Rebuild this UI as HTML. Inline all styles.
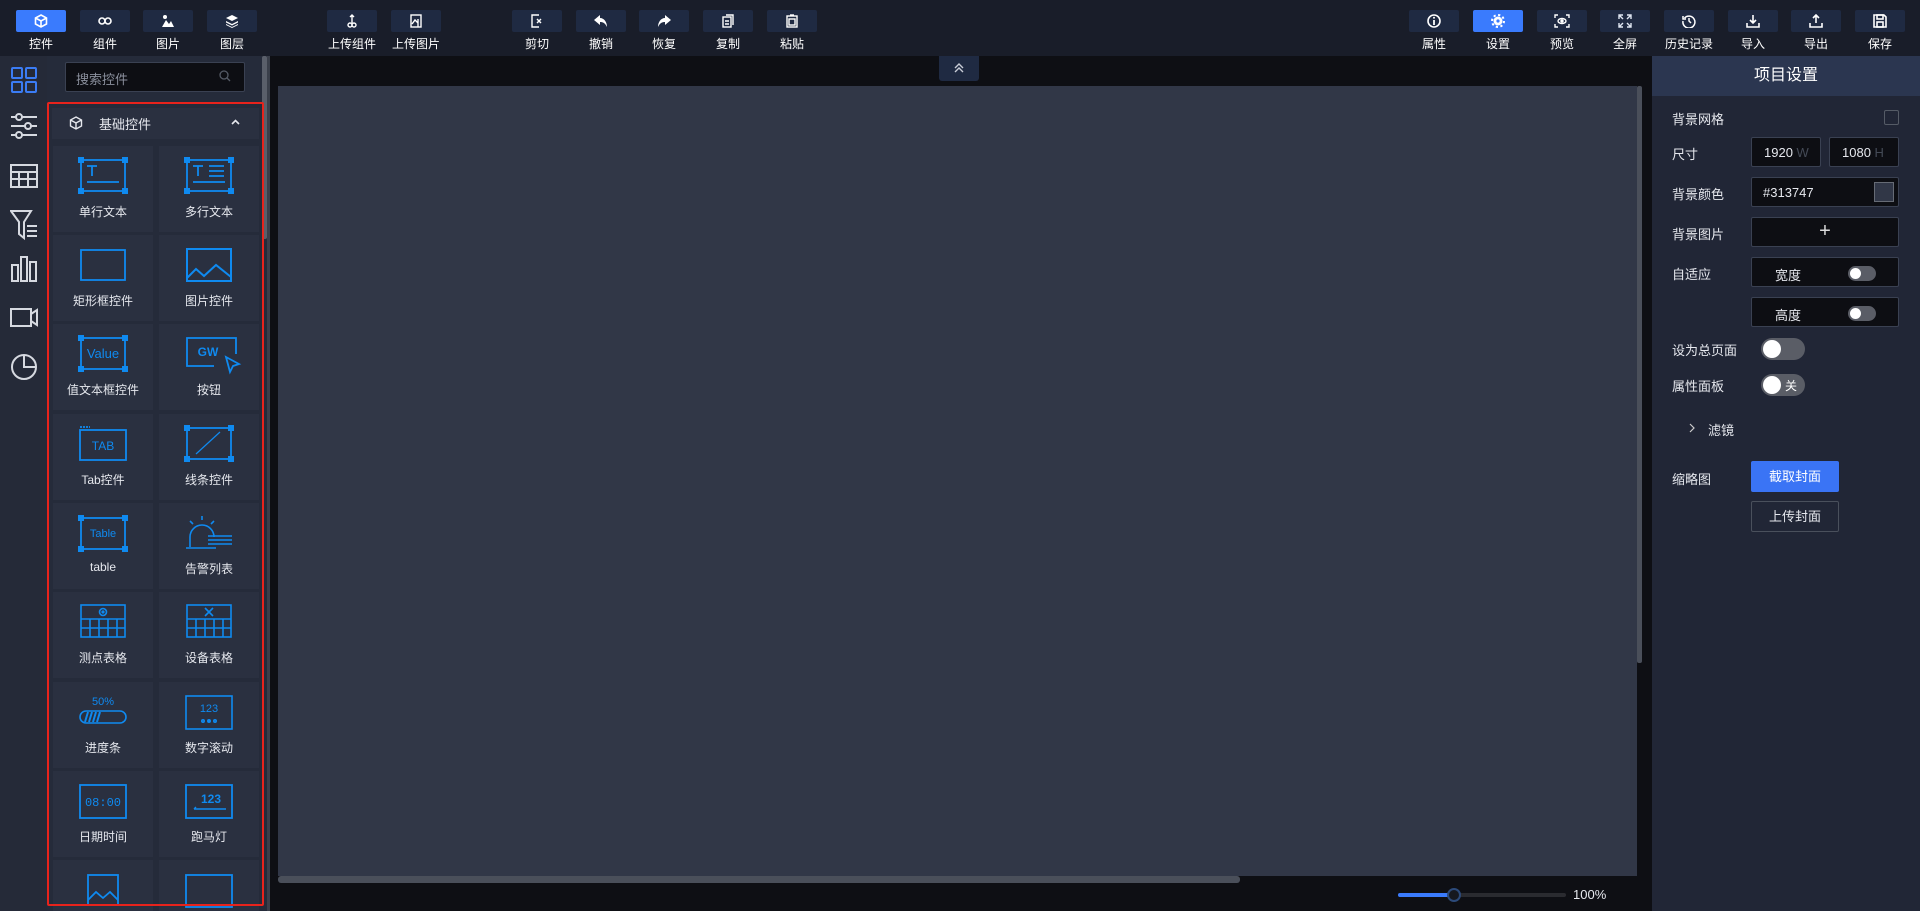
<!DOCTYPE html>
<html><head><meta charset="utf-8"><style>
*{margin:0;padding:0;box-sizing:border-box}
body{width:1920px;height:911px;overflow:hidden;background:#0e0f14;font-family:"Liberation Sans","Noto Sans CJK SC",sans-serif;color:#e6e8ee;position:relative}
.a{position:absolute}
.top{left:0;top:0;width:1920px;height:56px;background:#191d29}
.tb{position:absolute;top:10px;width:50px;height:22px;background:#1f2a42;border-radius:2px;display:flex;align-items:center;justify-content:center}
.tb.on{background:#3a7bfd}
.tl{position:absolute;top:35px;width:70px;text-align:center;font-size:12px;color:#fff}
.rail{left:0;top:56px;width:47px;height:855px;background:#252a38}
.panel{left:47px;top:56px;width:220px;height:855px;background:#252b3a}
.card{position:absolute;width:100px;height:86px;background:#2a3040}
.card svg{position:absolute;left:25px;top:10px;overflow:visible}
.card span{position:absolute;left:0;right:0;top:57px;text-align:center;font-size:12px;color:#e6e8ee}
.rp{left:1652px;top:56px;width:268px;height:855px;background:#212636}
.lab{position:absolute;left:20px;font-size:13px;color:#e6e8ee;white-space:nowrap}
.box{position:absolute;background:#0d0e13;border:1px solid #3a4152;border-radius:2px;font-size:13px;white-space:nowrap}
.tg{position:absolute;background:#5a5d66;border-radius:11px}
.tg i{position:absolute;background:#fff;border-radius:50%}
</style></head><body>
<div class="a top"></div>
<div class="tb on" style="left:16px"><svg width="14" height="14" viewBox="0 0 14 14" fill="none" stroke="#fff" stroke-width="1.6"><path d="M7 1L12.5 4V10L7 13L1.5 10V4Z M1.5 4L7 7L12.5 4 M7 7V13"/></svg></div><div class="tl" style="left:6px">控件</div>
<div class="tb" style="left:80px"><svg width="14" height="10" viewBox="0 0 14 10" fill="none" stroke="#fff" stroke-width="1.6"><rect x="1" y="2" width="6" height="6" rx="3"/><rect x="7" y="2" width="6" height="6" rx="3"/></svg></div><div class="tl" style="left:70px">组件</div>
<div class="tb" style="left:143px"><svg width="14" height="14" viewBox="0 0 14 14" fill="#fff"><circle cx="4" cy="3" r="2"/><path d="M1 13L5 6L8 10L10 7L13 13Z"/></svg></div><div class="tl" style="left:133px">图片</div>
<div class="tb" style="left:207px"><svg width="14" height="14" viewBox="0 0 14 14" fill="#fff"><path d="M7 1L13 4L7 7L1 4Z"/><path d="M1 7L7 10L13 7V8.5L7 11.5L1 8.5Z"/><path d="M1 10L7 13L13 10V11L7 14L1 11Z"/></svg></div><div class="tl" style="left:197px">图层</div>
<div class="tb" style="left:327px"><svg width="10" height="14" viewBox="0 0 10 14" fill="none" stroke="#fff" stroke-width="1.4"><path d="M5 1V9M3 3L5 1L7 3"/><circle cx="3" cy="11" r="2"/><circle cx="7" cy="11" r="2"/></svg></div><div class="tl" style="left:317px">上传组件</div>
<div class="tb" style="left:391px"><svg width="12" height="14" viewBox="0 0 12 14" fill="none" stroke="#fff" stroke-width="1.4"><rect x="1" y="1" width="10" height="12"/><path d="M2 10L5 6L8 9M8 5V13"/></svg></div><div class="tl" style="left:381px">上传图片</div>
<div class="tb" style="left:512px"><svg width="12" height="14" viewBox="0 0 12 14" fill="none" stroke="#fff" stroke-width="1.4"><path d="M8 1H1V13H8"/><path d="M6 5L10 9M10 5L6 9"/></svg></div><div class="tl" style="left:502px">剪切</div>
<div class="tb" style="left:576px"><svg width="14" height="12" viewBox="0 0 14 12" fill="#fff"><path d="M6 0L0 5L6 10V7C9 7 11 8 13 12C13 7 10 3 6 3Z"/></svg></div><div class="tl" style="left:566px">撤销</div>
<div class="tb" style="left:639px"><svg width="14" height="12" viewBox="0 0 14 12" fill="#fff"><path d="M8 0L14 5L8 10V7C5 7 3 8 1 12C1 7 4 3 8 3Z"/></svg></div><div class="tl" style="left:629px">恢复</div>
<div class="tb" style="left:703px"><svg width="12" height="14" viewBox="0 0 12 14" fill="none" stroke="#fff" stroke-width="1.4"><rect x="1" y="3" width="8" height="10"/><path d="M4 1H11V11M3 7H7M3 10H7"/></svg></div><div class="tl" style="left:693px">复制</div>
<div class="tb" style="left:767px"><svg width="12" height="14" viewBox="0 0 12 14" fill="none" stroke="#fff" stroke-width="1.4"><rect x="1" y="2" width="10" height="11"/><rect x="3" y="5" width="6" height="6"/><path d="M4 1H8"/></svg></div><div class="tl" style="left:757px">粘贴</div>

<div class="tb" style="left:1409px"><svg width="14" height="14" viewBox="0 0 14 14"><circle cx="7" cy="7" r="6" fill="none" stroke="#fff" stroke-width="1.6"/><path d="M7 6V11" stroke="#fff" stroke-width="1.8"/><circle cx="7" cy="3.8" r="1" fill="#fff"/></svg></div><div class="tl" style="left:1399px">属性</div>
<div class="tb on" style="left:1473px"><svg width="14" height="14" viewBox="0 0 14 14"><circle cx="7" cy="7" r="4.5" fill="#fff"/><circle cx="7" cy="7" r="6" fill="none" stroke="#fff" stroke-width="2" stroke-dasharray="2.2 2.5"/><circle cx="7" cy="7" r="1.6" fill="#3a7bfd"/></svg></div><div class="tl" style="left:1463px">设置</div>
<div class="tb" style="left:1537px"><svg width="16" height="14" viewBox="0 0 16 14" fill="none" stroke="#fff" stroke-width="1.4"><path d="M1 4V1H4M12 1H15V4M15 10V13H12M4 13H1V10"/><ellipse cx="8" cy="7" rx="4" ry="2.5"/><circle cx="8" cy="7" r="1" fill="#fff"/></svg></div><div class="tl" style="left:1527px">预览</div>
<div class="tb" style="left:1600px"><svg width="14" height="14" viewBox="0 0 14 14" fill="none" stroke="#dfe6f2" stroke-width="1.4"><path d="M1 5V1H5M1 1L5 5M9 1H13V5M13 1L9 5M13 9V13H9M13 13L9 9M5 13H1V9M1 13L5 9"/></svg></div><div class="tl" style="left:1590px">全屏</div>
<div class="tb" style="left:1664px"><svg width="14" height="14" viewBox="0 0 14 14" fill="none" stroke="#fff" stroke-width="1.5"><path d="M2.5 4A6 6 0 1 1 1 7"/><path d="M1 2V5H4M7 4V7L9 9"/></svg></div><div class="tl" style="left:1654px">历史记录</div>
<div class="tb" style="left:1728px"><svg width="14" height="14" viewBox="0 0 14 14" fill="none" stroke="#fff" stroke-width="1.6"><path d="M7 1V9M4 6L7 9L10 6M1 9V13H13V9"/></svg></div><div class="tl" style="left:1718px">导入</div>
<div class="tb" style="left:1791px"><svg width="14" height="14" viewBox="0 0 14 14" fill="none" stroke="#fff" stroke-width="1.6"><path d="M7 9V1M4 4L7 1L10 4M1 9V13H13V9"/></svg></div><div class="tl" style="left:1781px">导出</div>
<div class="tb" style="left:1855px"><svg width="14" height="14" viewBox="0 0 14 14" fill="none" stroke="#fff" stroke-width="1.6"><path d="M1 1H11L13 3V13H1Z"/><rect x="4" y="1" width="6" height="4"/><rect x="4" y="8" width="6" height="5"/></svg></div><div class="tl" style="left:1845px">保存</div>

<div class="a rail"></div>
<svg class="a" style="left:10px;top:66px" width="28" height="300" viewBox="0 0 28 300" fill="none" stroke="#d6d9e0" stroke-width="2">
<g stroke="#3b7cf4"><rect x="2" y="2" width="10" height="10" rx="1"/><rect x="16" y="2" width="10" height="10" rx="1"/><rect x="2" y="16" width="10" height="10" rx="1"/><rect x="16" y="16" width="10" height="10" rx="1"/></g>
<path d="M1 51H27M1 60H27M1 69H27"/><circle cx="9" cy="51" r="3" fill="#252a38"/><circle cx="18" cy="60" r="3" fill="#252a38"/><circle cx="9" cy="69" r="3" fill="#252a38"/>
<rect x="1" y="99" width="26" height="22"/><path d="M1 106H27M1 113H27M9 106V121M18 106V121"/>
<path d="M1 145H21L14 156V172L9 168V156Z"/><path d="M17 160H27M17 165H27M17 170H27"/>
<rect x="2" y="199" width="6" height="16"/><rect x="11" y="191" width="6" height="24"/><rect x="20" y="196" width="6" height="19"/>
<rect x="1" y="243" width="20" height="17"/><path d="M21 248L27 244V259L21 255"/>
</svg>
<svg class="a" style="left:10px;top:352px" width="30" height="30" viewBox="0 0 30 30" fill="none" stroke="#d6d9e0" stroke-width="2"><circle cx="14" cy="15" r="12"/><path d="M14 3V15H26"/></svg>

<div class="a panel"></div>
<div class="a" style="left:65px;top:62px;width:180px;height:30px;background:#0d0e13;border:1px solid #3a4152;border-radius:2px;font-size:13px;color:#8a8f9c;padding:6px 10px">搜索控件</div>
<svg class="a" style="left:219px;top:70px" width="12" height="12" viewBox="0 0 12 12" fill="none" stroke="#555b66" stroke-width="1.3"><circle cx="5" cy="5" r="4"/><path d="M8 8L11 11"/></svg>
<div class="a" style="left:262px;top:56px;width:5px;height:183px;background:#5a5f6a;border-radius:2px"></div>
<div class="a" style="left:52px;top:108px;width:207px;height:31px;background:#2a3040"></div>
<svg class="a" style="left:69px;top:116px" width="14" height="14" viewBox="0 0 14 14" fill="none" stroke="#e6e8ee" stroke-width="1.4"><path d="M7 1L12.5 4V10L7 13L1.5 10V4Z M1.5 4L7 7L12.5 4 M7 7V13"/></svg>
<div class="a" style="left:99px;top:114px;font-size:13px">基础控件</div>
<svg class="a" style="left:231px;top:119px" width="9" height="6" viewBox="0 0 9 6" fill="none" stroke="#e6e8ee" stroke-width="1.6"><path d="M1 5L4.5 1.5L8 5"/></svg>

<div class="a" style="left:53px;top:146px;width:206px;height:765px;overflow:hidden">
<div class="card" style="left:0;top:0"><svg width="50" height="40" viewBox="0 0 50 40" fill="none" stroke="#0f8af0" stroke-width="1.8"><rect x="3" y="4" width="44" height="31"/><g fill="#0f8af0" stroke="none"><rect x="0" y="1" width="6" height="6"/><rect x="44" y="1" width="6" height="6"/><rect x="0" y="32" width="6" height="6"/><rect x="44" y="32" width="6" height="6"/></g><path d="M9 10H19M14 10V20M9 26H41"/></svg><span>单行文本</span></div>
<div class="card" style="left:106px;top:0"><svg width="50" height="40" viewBox="0 0 50 40" fill="none" stroke="#0f8af0" stroke-width="1.8"><rect x="3" y="4" width="44" height="31"/><g fill="#0f8af0" stroke="none"><rect x="0" y="1" width="6" height="6"/><rect x="44" y="1" width="6" height="6"/><rect x="0" y="32" width="6" height="6"/><rect x="44" y="32" width="6" height="6"/></g><path d="M9 10H19M14 10V20M9 26H41M25 10H40M25 15H40M25 20H40"/></svg><span>多行文本</span></div>
<div class="card" style="left:0;top:89px"><svg width="50" height="40" viewBox="0 0 50 40" fill="none" stroke="#0f8af0" stroke-width="1.8"><rect x="3" y="5" width="44" height="30"/></svg><span>矩形框控件</span></div>
<div class="card" style="left:106px;top:89px"><svg width="50" height="40" viewBox="0 0 50 40" fill="none" stroke="#0f8af0" stroke-width="2"><rect x="3" y="4" width="44" height="32"/><path d="M3 33L12 24L20 31L32 20L47 32"/></svg><span>图片控件</span></div>
<div class="card" style="left:0;top:178px"><svg width="50" height="40" viewBox="0 0 50 40" fill="none" stroke="#0f8af0" stroke-width="1.8"><rect x="3" y="4" width="44" height="31"/><g fill="#0f8af0" stroke="none"><rect x="0" y="1" width="6" height="6"/><rect x="44" y="1" width="6" height="6"/><rect x="0" y="32" width="6" height="6"/><rect x="44" y="32" width="6" height="6"/><text x="25" y="24" font-size="13" text-anchor="middle" font-family="Liberation Sans">Value</text></g></svg><span>值文本框控件</span></div>
<div class="card" style="left:106px;top:178px"><svg width="60" height="40" viewBox="0 0 60 40" fill="none" stroke="#0f8af0" stroke-width="1.8"><path d="M30 32H3V4H52V20"/><path d="M42 23L55 30L49 32L46 38Z"/><text x="24" y="22" font-size="12" font-weight="bold" text-anchor="middle" fill="#0f8af0" stroke="none" font-family="Liberation Sans">GW</text></svg><span>按钮</span></div>
<div class="card" style="left:0;top:268px"><svg width="50" height="40" viewBox="0 0 50 40" fill="none" stroke="#0f8af0" stroke-width="1.8"><rect x="2" y="6" width="46" height="30"/><path d="M2 3H12" stroke-dasharray="2 1"/><text x="25" y="26" font-size="12" text-anchor="middle" fill="#0f8af0" stroke="none" font-family="Liberation Sans">TAB</text></svg><span>Tab控件</span></div>
<div class="card" style="left:106px;top:268px"><svg width="50" height="40" viewBox="0 0 50 40" fill="none" stroke="#0f8af0" stroke-width="1.8"><rect x="3" y="4" width="44" height="31"/><g fill="#0f8af0" stroke="none"><rect x="0" y="1" width="6" height="6"/><rect x="44" y="1" width="6" height="6"/><rect x="0" y="32" width="6" height="6"/><rect x="44" y="32" width="6" height="6"/></g><path d="M12 30L36 8" stroke-width="1.2"/></svg><span>线条控件</span></div>
<div class="card" style="left:0;top:357px"><svg width="50" height="40" viewBox="0 0 50 40" fill="none" stroke="#0f8af0" stroke-width="1.8"><rect x="3" y="5" width="44" height="31"/><g fill="#0f8af0" stroke="none"><rect x="0" y="2" width="6" height="6"/><rect x="44" y="2" width="6" height="6"/><rect x="0" y="33" width="6" height="6"/><rect x="44" y="33" width="6" height="6"/><text x="25" y="24" font-size="11" text-anchor="middle" font-family="Liberation Sans">Table</text></g></svg><span>table</span></div>
<div class="card" style="left:106px;top:357px"><svg width="52" height="40" viewBox="0 0 52 40" fill="none" stroke="#0f8af0" stroke-width="1.6"><path d="M6 34V24A12 12 0 0 1 30 24"/><path d="M2 35H32M24 27H48M24 31H48M24 23H48M18 3V7M6 8L9 11M30 8L27 11"/></svg><span>告警列表</span></div>
<div class="card" style="left:0;top:446px"><svg width="50" height="40" viewBox="0 0 50 40" fill="none" stroke="#0f8af0" stroke-width="1.6"><rect x="3" y="3" width="44" height="32"/><path d="M3 17H47M3 26H47M12 17V35M21 17V35M30 17V35M39 17V35"/><circle cx="25" cy="10" r="3.5"/><circle cx="25" cy="10" r="0.8" fill="#0f8af0"/></svg><span>测点表格</span></div>
<div class="card" style="left:106px;top:446px"><svg width="50" height="40" viewBox="0 0 50 40" fill="none" stroke="#0f8af0" stroke-width="1.6"><rect x="3" y="3" width="44" height="32"/><path d="M3 17H47M3 26H47M12 17V35M21 17V35M30 17V35M39 17V35M21 6L29 14M29 6L21 14" /></svg><span>设备表格</span></div>
<div class="card" style="left:0;top:536px"><svg width="50" height="40" viewBox="0 0 50 40" fill="none" stroke="#0f8af0" stroke-width="1.6"><text x="25" y="13" font-size="11" text-anchor="middle" fill="#0f8af0" stroke="none" font-family="Liberation Sans">50%</text><rect x="2" y="19" width="46" height="12" rx="6"/><path d="M7 30L10 20M11 30L14 20M15 30L18 20M19 30L22 20" stroke-width="2"/></svg><span>进度条</span></div>
<div class="card" style="left:106px;top:536px"><svg width="50" height="40" viewBox="0 0 50 40" fill="none" stroke="#0f8af0" stroke-width="1.6"><rect x="2" y="4" width="46" height="33"/><text x="25" y="20" font-size="11" text-anchor="middle" fill="#0f8af0" stroke="none" font-family="Liberation Sans">123</text><circle cx="19" cy="29" r="1.2"/><circle cx="25" cy="29" r="1.2" fill="#0f8af0"/><circle cx="31" cy="29" r="1.2"/></svg><span>数字滚动</span></div>
<div class="card" style="left:0;top:625px"><svg width="50" height="40" viewBox="0 0 50 40" fill="none" stroke="#0f8af0" stroke-width="1.8"><rect x="2" y="4" width="46" height="33"/><text x="25" y="25" font-size="12" text-anchor="middle" fill="#0f8af0" stroke="none" font-family="Liberation Mono">08:00</text></svg><span>日期时间</span></div>
<div class="card" style="left:106px;top:625px"><svg width="50" height="40" viewBox="0 0 50 40" fill="none" stroke="#0f8af0" stroke-width="1.8"><rect x="2" y="4" width="46" height="33"/><text x="27" y="22" font-size="12" font-weight="bold" text-anchor="middle" fill="#0f8af0" stroke="none" font-family="Liberation Sans">123</text><path d="M10 28H42M12 26L10 28" stroke-width="1.4"/></svg><span>跑马灯</span></div>
<div class="card" style="left:0;top:714px"><svg width="50" height="40" viewBox="0 0 50 40" fill="none" stroke="#0f8af0" stroke-width="1.8"><rect x="10" y="5" width="30" height="30"/><path d="M10 30L18 22L25 28L32 22L40 30"/></svg></div>
<div class="card" style="left:106px;top:714px"><svg width="50" height="40" viewBox="0 0 50 40" fill="none" stroke="#0f8af0" stroke-width="1.8"><rect x="2" y="5" width="46" height="32"/></svg></div>
</div>
<div class="a" style="left:47px;top:102px;width:217px;height:804px;border:2px solid #e8231c;border-radius:2px"></div>

<div class="a" style="left:267px;top:56px;width:3px;height:855px;background:#3a3f4a"></div>
<div class="a" style="left:939px;top:56px;width:40px;height:25px;background:#1f2a42;border-radius:0 0 3px 3px"></div>
<svg class="a" style="left:953px;top:62px" width="12" height="12" viewBox="0 0 12 12" fill="none" stroke="#c8ccd6" stroke-width="1.4"><path d="M2 6L6 2L10 6M2 10L6 6L10 10"/></svg>
<div class="a" style="left:278px;top:86px;width:1359px;height:790px;background:#313747"></div>
<div class="a" style="left:1637px;top:86px;width:5px;height:577px;background:#4a4f5a;border-radius:2px"></div>
<div class="a" style="left:278px;top:876px;width:962px;height:7px;background:#4a4f5a;border-radius:3px"></div>
<div class="a" style="left:1398px;top:893px;width:168px;height:4px;background:#2a2b30;border-radius:2px"></div>
<div class="a" style="left:1398px;top:893px;width:56px;height:4px;background:#3a7bfd;border-radius:2px"></div>
<div class="a" style="left:1447px;top:888px;width:14px;height:14px;background:#16181f;border:2px solid #2c4a7a;border-radius:50%"></div>
<div class="a" style="left:1573px;top:887px;font-size:13px;color:#e6e8ee">100%</div>

<div class="a rp"></div>
<div class="a" style="left:1652px;top:56px;width:268px;height:40px;background:#2b3650;text-align:center;font-size:16px;line-height:40px;color:#fff">项目设置</div>
<div class="a" style="left:1652px;top:0;width:268px;height:911px">
<div class="lab" style="top:109px">背景网格</div>
<div class="a" style="left:232px;top:110px;width:15px;height:15px;border:1px solid #555b66;border-radius:2px"></div>
<div class="lab" style="top:144px">尺寸</div>
<div class="box" style="left:99px;top:137px;width:70px;height:30px;padding:7px 12px">1920 <span style="color:#444a56">W</span></div>
<div class="box" style="left:177px;top:137px;width:70px;height:30px;padding:7px 12px">1080 <span style="color:#444a56">H</span></div>
<div class="lab" style="top:184px">背景颜色</div>
<div class="box" style="left:99px;top:177px;width:148px;height:30px;padding:7px 11px">#313747</div>
<div class="a" style="left:222px;top:182px;width:20px;height:20px;background:#313747;border:1px solid #666b75"></div>
<div class="lab" style="top:224px">背景图片</div>
<div class="box" style="left:99px;top:217px;width:148px;height:30px;text-align:center;font-size:20px;line-height:26px;color:#ddd">+</div>
<div class="lab" style="top:264px">自适应</div>
<div class="box" style="left:99px;top:257px;width:148px;height:30px;padding:7px 23px">宽度</div>
<div class="tg" style="left:196px;top:266px;width:28px;height:15px"><i style="left:2px;top:2px;width:11px;height:11px"></i></div>
<div class="box" style="left:99px;top:297px;width:148px;height:30px;padding:7px 23px">高度</div>
<div class="tg" style="left:196px;top:306px;width:28px;height:15px"><i style="left:2px;top:2px;width:11px;height:11px"></i></div>
<div class="lab" style="top:340px">设为总页面</div>
<div class="tg" style="left:109px;top:338px;width:44px;height:22px"><i style="left:2px;top:2px;width:18px;height:18px"></i></div>
<div class="lab" style="top:376px">属性面板</div>
<div class="tg" style="left:109px;top:374px;width:44px;height:22px"><i style="left:2px;top:2px;width:18px;height:18px"></i><span style="position:absolute;left:24px;top:3px;font-size:12px;color:#fff">关</span></div>
<svg class="a" style="left:37px;top:423px" width="6" height="10" viewBox="0 0 6 10" fill="none" stroke="#ccc" stroke-width="1.2"><path d="M1 1L5 5L1 9"/></svg>
<div class="lab" style="left:56px;top:420px">滤镜</div>
<div class="lab" style="top:469px">缩略图</div>
<div class="a" style="left:99px;top:461px;width:88px;height:31px;background:#3a74f5;border-radius:2px;text-align:center;line-height:31px;font-size:13px;color:#fff">截取封面</div>
<div class="a" style="left:99px;top:501px;width:88px;height:31px;border:1px solid #4a505c;border-radius:2px;text-align:center;line-height:29px;font-size:13px;color:#e6e8ee">上传封面</div>
</div>
</body></html>
